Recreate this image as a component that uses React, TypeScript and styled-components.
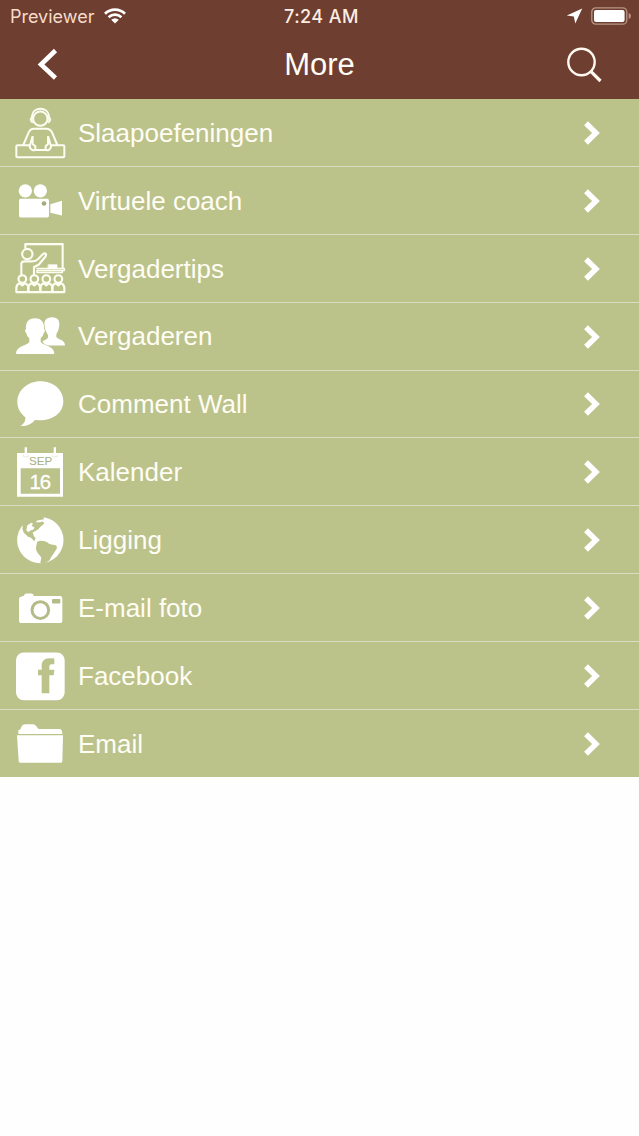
import React from "react";
import styled, { createGlobalStyle } from "styled-components";

const brown = "#6e3e30";
const olive = "#bbc38b";

const GlobalStyle = createGlobalStyle`
  body { margin: 0; background: #fefefe; }
`;

const Screen = styled.div`
  width: 639px;
  min-height: 1136px;
  background: #fefefe;
  font-family: "Liberation Sans", Arial, sans-serif;
  color: #fffdf4;
`;

const Header = styled.header`
  height: 99px;
  background: ${brown};
`;

const StatusBar = styled.div`
  height: 32px;
  display: grid;
  grid-template-columns: 1fr auto 1fr;
  align-items: center;
  padding: 0 7px 0 10px;
  box-sizing: border-box;
  font-family: Inter, sans-serif;
  font-size: 18px;
  line-height: 30px;
`;

const Carrier = styled.div`
  display: flex;
  align-items: center;
  gap: 10px;
  color: #f6dccb;
  letter-spacing: 0;
`;

const StatusText = styled.span`
  padding-top: 2px;
`;

const Clock = styled.div`
  font-weight: 500;
  letter-spacing: 0.45px;
  color: #fdeee2;
  padding: 2px 0 0 1px;
`;

const Indicators = styled.div`
  display: flex;
  justify-content: flex-end;
  align-items: center;
  gap: 8px;
`;

const NavBar = styled.nav`
  height: 67px;
  display: grid;
  grid-template-columns: 1fr auto 1fr;
  align-items: center;
  padding: 0 36px;
`;

const Title = styled.h1`
  margin: 0;
  font-size: 31px;
  font-weight: 400;
  line-height: 66px;
  height: 67px;
`;

const NavButton = styled.button<{ $end?: boolean }>`
  display: flex;
  justify-content: ${(p) => (p.$end ? "flex-end" : "flex-start")};
  padding: 0 0 ${(p) => (p.$end ? 0 : 3)}px;
  border: 0;
  background: none;
`;

const List = styled.ul`
  margin: 0;
  padding: 0;
  list-style: none;
`;

const Row = styled.li`
  height: 67.88px;
  box-sizing: border-box;
  display: flex;
  align-items: center;
  padding-right: 39px;
  background: ${olive};
  border-bottom: 1px solid #d9ddc1;
  &:last-child {
    height: 67px;
    border-bottom: 0;
  }
`;

const Glyph = styled.svg`
  flex: none;
  width: 70px;
  height: 67.8px;
  margin-bottom: -0.2px;
`;

const Label = styled.span`
  flex: 1;
  padding: 1.8px 0 0 8px;
  font-size: 26px;
  line-height: 65px;
`;

const Arrow = styled.svg`
  width: 17px;
  height: 26px;
  margin-top: 1px;
`;

const line = { fill: "none", stroke: "#fdfdf2", strokeWidth: 6, strokeLinejoin: "round", strokeLinecap: "round" } as const;

const items: { label: string; top: number; icon: React.ReactNode }[] = [
  {
    label: "Slaapoefeningen",
    top: 3,
    icon: (
      <g {...line}>
        <circle cx="121" cy="62" r="21.5" />
        <path d="M96 54C99 25 143 25 147 54" />
        <path d="M98 55C88 56 88 73 98 75ZM145 55C155 56 155 73 145 75Z" fill="#fdfdf2" strokeWidth="2" />
        <path d="M70 141L86 103Q91 92 102 92H139Q150 92 156 103L172 141M97 117L90 142M145 117L152 142" />
        <path d="M88 142H52Q49 142 49 145V175Q49 178 52 178H190Q193 178 193 175V145Q193 142 190 142H154" />
        <path d="M98 117V138L106 145V153Q106 157 99 157Q90 154 88 142M144 117V138L137 145V153Q137 157 144 157Q152 154 154 142M106 156H137" />
      </g>
    ),
  },
  {
    label: "Virtuele coach",
    top: 206.4,
    icon: (
      <g fill="#fff">
        <circle cx="76" cy="278" r="20" />
        <circle cx="121" cy="278" r="20" />
        <rect x="57" y="302" width="90" height="56" rx="5" />
        <path d="M151 318L186 308V352L151 344Z" />
        <circle cx="132" cy="316" r="7" fill="#a4aa7a" />
      </g>
    ),
  },
  {
    label: "Vergadertips",
    top: 1.8,
    icon: (
      <g {...line} strokeWidth="6.4">
        <path d="M76 43V32H188V103" />
        <circle cx="82" cy="62" r="15.5" />
        <path d="M64 126V92Q64 84 73 84H97Q108 84 113 78L129 62Q134 58 138 62Q139 66 136 70L116 94L102 101V124" />
        <path d="M111 105H193V111H111V117H187V111" strokeWidth="4.5" />
        <path d="M145 94H171V104H145Z" fill="#fff" strokeWidth="2" />
        {[67, 103, 139, 175].map((x) => (
          <g key={x}>
            <circle cx={x} cy="137" r="11.5" />
            <path d={`M${x - 18} 176V163Q${x - 16} 151 ${x - 7} 150L${x} 156L${x + 7} 150Q${x + 16} 151 ${x + 18} 163V176Z`} />
          </g>
        ))}
      </g>
    ),
  },
  {
    label: "Vergaderen",
    top: 205.2,
    icon: (
      <g fill="#fff">
        <path d="M136 290C127 261 139 251 156 251S184 261 175 290L169 302V310C175 319 195 317 195 336H137L127 324C142 315 146 315 144 305Z" />
        <path d="M105 254C125 254 134 268 132 286Q138 289 131 300Q129 309 122 315V325C134 338 163 337 163 361H48C48 337 78 338 88 325V315Q81 309 79 300Q72 289 78 286C76 268 85 254 105 254Z" fill="#fff" stroke={olive} strokeWidth="3" paintOrder="stroke" />
      </g>
    ),
  },
  {
    label: "Comment Wall",
    top: 2,
    icon: (
      <path fill="#fff" d="M121 36C159 36 190 61 190 96S159 153 119 153L105 152C94 165 80 171 62 170C73 163 77 155 76 144C61 132 52 116 52 98C52 63 83 36 121 36Z" />
    ),
  },
  {
    label: "Kalender",
    top: 206,
    icon: (
      <g>
        <path fill="#fff" fillRule="evenodd" d="M51 251H74V234H81V251H161V234H168V251H189V382H51ZM62 297V373H180V297Z" />
        <path d="M70 256V262H85V256M157 256V262H172V256" fill="none" stroke="#e0e4ca" strokeWidth="2" />
        <text x="122" y="287" textAnchor="middle" fontSize="35" fill="#a9b07f" textLength="70" lengthAdjust="spacingAndGlyphs">SEP</text>
        <text x="121" y="359" textAnchor="middle" fontSize="61" fill="#fff" stroke="#fff" strokeWidth="1" textLength="65" lengthAdjust="spacing">16</text>
      </g>
    ),
  },
  {
    label: "Ligging",
    top: -0.6,
    icon: (
      <g>
        <circle cx="121" cy="102" r="69.5" fill="#fff" />
        <path fill={olive} d="M66 58L76 45C90 34 107 29 130 30L132 39L112 43L107 48L121 48L128 45L133 52L122 61L115 69L105 75L98 79L102 91L107 95L103 105L93 95L84 92L71 79Q65 70 68 59Z" />
        <path fill="#fff" d="M82 57L94 50L99 53L95 59L104 65L99 71L91 73L85 78L79 72Z" />
        <path fill={olive} d="M112 107C120 100 140 104 147 113L157 116C168 116 173 120 170 128L159 145Q153 152 149 162L138 169L126 173L121 170L124 154L112 139Q105 128 109 117Z" />
      </g>
    ),
  },
  {
    label: "E-mail foto",
    top: 202.8,
    icon: (
      <g>
        <path fill="#fff" d="M65 270L72 268Q73 261 80 261H94Q101 261 101 269H180Q187 269 187 276V342Q187 350 179 350H65Q57 350 57 342V278Q57 271 65 270Z" />
        <circle cx="121" cy="311" r="25" fill="none" stroke="#b4bb89" strokeWidth="9" />
        <rect x="156" y="278" width="25" height="13" rx="3" fill="#b4bb89" />
      </g>
    ),
  },
  {
    label: "Facebook",
    top: 5.5,
    icon: (
      <g>
        <rect x="48" y="37" width="146" height="143" rx="23" fill="#fff" />
        <path fill={olive} d="M163 55V72H154Q148 72 148 79V89H163L161 105H148V159H125V105H114V89H125V77Q125 54 148 54Z" />
      </g>
    ),
  },
  {
    label: "Email",
    top: 209,
    icon: (
      <g fill="#fff">
        <path d="M55 281V270L61 267L65 258Q68 252 76 252H98Q106 252 110 259L116 266H180Q187 267 187 281Z" />
        <path d="M51 285H189L187 363Q187 367 183 367H60Q56 367 56 363Z" />
      </g>
    ),
  },
];

export default function App() {
  return (
    <Screen>
      <GlobalStyle />
      <Header>
        <StatusBar>
          <Carrier>
            <StatusText>Previewer</StatusText>
            <svg width="22" height="16" viewBox="0 0 22 16" fill="none" stroke="#fff" strokeWidth="2.7">
              <path d="M1 5.7C6.5 0.2 15.5 0.2 21 5.7M4.6 9.3C8.3 5.8 13.7 5.8 17.4 9.3" />
              <path d="M7.2 11.8Q11 8.8 14.8 11.8L11 15.6Z" fill="#fff" stroke="none" />
            </svg>
          </Carrier>
          <Clock>7:24 AM</Clock>
          <Indicators>
            <svg width="17" height="16" viewBox="0 0 17 16">
              <path d="M16.2 0.5L9.3 15.5L7.8 8.6L0.8 7.4Z" fill="#fff" />
            </svg>
            <svg width="41" height="18" viewBox="0 0 41 18">
              <rect x="0.8" y="0.8" width="35" height="16.4" rx="4" fill="none" stroke="#b99584" strokeWidth="1.3" />
              <rect x="3" y="3" width="30.6" height="12" rx="2" fill="#fff" />
              <path d="M37.7 6Q40 6.5 40 9T37.7 12Z" fill="#b99584" />
            </svg>
          </Indicators>
        </StatusBar>
        <NavBar>
          <NavButton aria-label="Back">
            <svg width="23" height="32" viewBox="0 0 23 32">
              <path d="M19.5 2.5L5 16.5L19.5 30" fill="none" stroke="#fff" strokeWidth="4.6" />
            </svg>
          </NavButton>
          <Title>More</Title>
          <NavButton $end aria-label="Search">
            <svg width="37" height="37" viewBox="0 0 37 37" fill="none" stroke="#fff9f0">
              <circle cx="15.5" cy="15" r="13.2" strokeWidth="2.4" />
              <path d="M24.8 24.3L34.5 34" strokeWidth="3.2" />
            </svg>
          </NavButton>
        </NavBar>
      </Header>
      <List>
        {items.map((item) => (
          <Row key={item.label}>
            <Glyph viewBox={`0 ${item.top} 210 203.4`}>{item.icon}</Glyph>
            <Label>{item.label}</Label>
            <Arrow viewBox="0 0 17 26">
              <path d="M3 3.2L13 13L3 22.8" fill="none" stroke="#fff" strokeWidth="5.4" />
            </Arrow>
          </Row>
        ))}
      </List>
    </Screen>
  );
}
